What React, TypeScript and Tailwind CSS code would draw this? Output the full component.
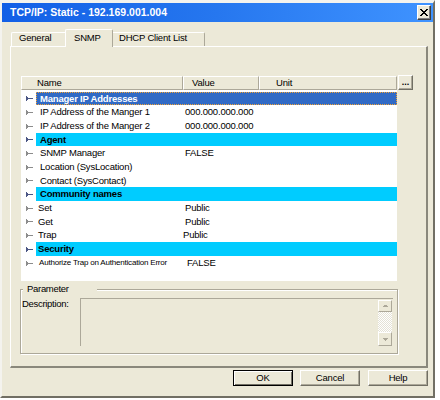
import React from 'react';

type Row = {
  kind: 'sel' | 'hdr' | 'data';
  name: string;
  value?: string;
  h: number;
  pl: number;
  vpl?: number;
  small?: boolean;
};

const rows: Row[] = [
  { kind: 'sel', name: 'Manager IP Addresses', h: 13, pl: 4 },
  { kind: 'data', name: 'IP Address of the Manger 1', value: '000.000.000.000', h: 14, pl: 4 },
  { kind: 'data', name: 'IP Address of the Manger 2', value: '000.000.000.000', h: 14, pl: 4 },
  { kind: 'hdr', name: 'Agent', h: 13, pl: 4 },
  { kind: 'data', name: 'SNMP Manager', value: 'FALSE', h: 14, pl: 4 },
  { kind: 'data', name: 'Location (SysLocation)', h: 14, pl: 4 },
  { kind: 'data', name: 'Contact (SysContact)', h: 13, pl: 4 },
  { kind: 'hdr', name: 'Community names', h: 14, pl: 4 },
  { kind: 'data', name: 'Set', value: 'Public', h: 14, pl: 2 },
  { kind: 'data', name: 'Get', value: 'Public', h: 13, pl: 2 },
  { kind: 'data', name: 'Trap', value: 'Public', h: 14, pl: 2, vpl: 0 },
  { kind: 'hdr', name: 'Security', h: 14, pl: 2 },
  { kind: 'data', name: 'Authorize Trap on Authentication Error', value: 'FALSE', h: 14, pl: 3, vpl: 4, small: true },
];

function Marker({ dark }: { dark: boolean }) {
  return (
    <svg width="7" height="5" viewBox="0 0 7 5" className="block" shapeRendering="crispEdges">
      <g fill={dark ? '#4B5684' : '#8C8C8C'}>
        <rect x="0" y="0" width="1" height="5" />
        <rect x="1" y="1" width="1" height="3" />
        <rect x="2" y="2" width="5" height="1" />
      </g>
    </svg>
  );
}

function ListRow({ r }: { r: Row }) {
  const dark = r.kind !== 'data';
  let area = 'flex-1 h-full flex items-center';
  if (r.kind === 'sel') area += ' bg-[#316AC5] border border-dotted border-[#F2A235] text-white font-bold';
  if (r.kind === 'hdr') area += ' bg-[#00CCFF] font-bold';
  const textSize = r.small ? 'text-[8px] tracking-[-0.2px]' : 'text-[9.5px] tracking-[-0.2px]';
  return (
    <div className="flex" style={{ height: r.h }}>
      <div className="w-[15px] h-full flex items-center pl-[5px]">
        <Marker dark={dark} />
      </div>
      <div className={area}>
        <div
          className={`w-[147px] shrink-0 whitespace-nowrap leading-none ${textSize} ${r.kind === 'sel' ? '-ml-px' : ''}`}
          style={{ paddingLeft: r.pl }}
        >
          {r.name}
        </div>
        {r.value && (
          <div
            className="whitespace-nowrap leading-none text-[9.5px] tracking-[-0.2px]"
            style={{ paddingLeft: r.vpl ?? 2 }}
          >
            {r.value}
          </div>
        )}
      </div>
    </div>
  );
}

const headCell =
  'h-full flex items-center border-t border-l border-t-white border-l-white border-r border-b border-r-[#ACA899] border-b-[#ACA899] text-[9.5px] tracking-[-0.2px] leading-none';

const btnNormal =
  'w-[60px] h-[16px] flex items-center justify-center bg-[#ECE9D8] border border-t-white border-l-white border-r-[#716F64] border-b-[#716F64] shadow-[inset_-1px_-1px_0_#ACA899] text-[9.5px] tracking-[-0.2px] leading-none';

export default function App() {
  return (
    <div className="w-[440px] h-[400px] bg-white font-['Liberation_Sans',Arial,sans-serif] text-black">
      <div className="w-[435px] h-[398px] bg-[#ECE9D8] flex flex-col border-t-[3px] border-l-2 border-r-2 border-b-2 border-t-[#F4F3EE] border-l-[#F4F3EE] border-r-[#716F64] border-b-[#716F64]">
        {/* Title bar */}
        <div className="h-[19px] shrink-0 flex items-center justify-between bg-linear-to-r from-[#125FE6] via-[#2677EF] to-[#3F93FF] pl-[8px] pr-[2px]">
          <span className="text-white font-bold text-[10.5px] leading-none whitespace-nowrap">
            TCP/IP: Static - 192.169.001.004
          </span>
          <div className="w-[14px] h-[15px] bg-[#ECE9D8] flex items-center justify-center border border-t-white border-l-white border-r-[#404040] border-b-[#404040] shadow-[inset_-1px_-1px_0_#808080]">
            <svg width="8" height="7" viewBox="0 0 8 7" shapeRendering="crispEdges">
              <path d="M0 0h2l2 2.5L6 0h2L5 3.5 8 7H6L4 4.5 2 7H0l3-3.5z" fill="#000" />
            </svg>
          </div>
        </div>

        {/* Tabs */}
        <div className="h-[24px] shrink-0 flex items-end pl-[9px]">
          <div className="w-[54px] h-[14px] pl-[7px] border-t border-l border-t-white border-l-white text-[9.5px] tracking-[-0.2px] leading-[9px] rounded-tl-[2px]">
            General
          </div>
          <div className="relative z-10 -mb-px w-[48px] h-[18px] pl-[8px] pt-[3px] bg-[#ECE9D8] border-t border-l border-r border-t-white border-l-white border-r-[#ACA899] text-[9.5px] tracking-[-0.2px] leading-[9px] rounded-t-[2px]">
            SNMP
          </div>
          <div className="w-[92px] h-[14px] pl-[6px] border-t border-r border-t-white border-r-[#ACA899] text-[9.5px] tracking-[-0.2px] leading-[9px] rounded-tr-[2px]">
            DHCP Client List
          </div>
        </div>

        {/* Panel */}
        <div className="ml-[8px] w-[418px] h-[322px] shrink-0 flex flex-col border-t border-l border-t-white border-l-white border-r-2 border-b-2 border-r-[#8A887C] border-b-[#8A887C]">
          <div className="flex pt-[29px] pl-[10px]">
            <div className="w-[376px]">
              <div className="h-[14px] flex">
                <div className={`${headCell} w-[162px] pl-[15px]`}>Name</div>
                <div className={`${headCell} w-[76px] pl-[8px]`}>Value</div>
                <div className={`${headCell} flex-1 pl-[16px]`}>Unit</div>
              </div>
              <div className="h-[191px] bg-white pt-[2px]">
                {rows.map((r) => (
                  <ListRow key={r.name} r={r} />
                ))}
              </div>
            </div>
            <div className="ml-[1px] -mt-[1px] w-[15px] h-[15px] bg-[#ECE9D8] flex items-end justify-center pb-[2px] border border-t-white border-l-white border-r-[#716F64] border-b-[#716F64] shadow-[inset_-1px_-1px_0_#ACA899] text-[9px] font-bold leading-none">
              ...
            </div>
          </div>

          {/* Parameter group */}
          <div className="relative ml-[9px] mt-[8px] w-[378px] h-[65px] border border-[#ACA899] shadow-[1px_1px_0_#fff,inset_1px_1px_0_#fff]">
            <div className="absolute left-[2px] -top-[7px] h-[12px] w-[74px] bg-[#ECE9D8] pl-[4px] text-[9.5px] tracking-[-0.3px] leading-[12px]">
              Parameter
            </div>
            <div className="flex pt-[8px]">
              <div className="w-[59px] pl-[1px] text-[9.5px] tracking-[-0.3px] leading-[12px]">Description:</div>
              <div className="w-[313px] h-[48px] border-t border-l border-[#ACA899] flex justify-end pr-[1px] pt-[1px]">
                <div className="w-[14px] h-full flex flex-col">
                  <div className="h-[12px] flex items-center justify-center bg-[#ECE9D8] border border-t-white border-l-white border-r-[#ACA899] border-b-[#ACA899]">
                    <svg width="5" height="2" viewBox="0 0 5 2" shapeRendering="crispEdges">
                      <rect x="0" y="1" width="5" height="1" fill="#ACA899" />
                      <rect x="1" y="0" width="3" height="1" fill="#ACA899" />
                    </svg>
                  </div>
                  <div className="flex-1 [background-image:repeating-conic-gradient(#ffffff_0_25%,#E4E2D6_0_50%)] [background-size:2px_2px]" />
                  <div className="h-[14px] flex items-center justify-center bg-[#ECE9D8] border border-t-white border-l-white border-r-[#ACA899] border-b-[#ACA899]">
                    <svg width="5" height="3" viewBox="0 0 5 3" shapeRendering="crispEdges">
                      <rect x="0" y="0" width="5" height="1" fill="#ACA899" />
                      <rect x="1" y="1" width="3" height="1" fill="#ACA899" />
                      <rect x="2" y="2" width="1" height="1" fill="#ACA899" />
                    </svg>
                  </div>
                </div>
              </div>
            </div>
          </div>
        </div>

        {/* Buttons */}
        <div className="mt-[2px] flex justify-end pr-[5px]">
          <div className="w-[60px] h-[16px] flex items-center justify-center bg-[#ECE9D8] border border-black shadow-[inset_1px_1px_0_#fff,inset_-1px_-1px_0_#716F64] text-[9.5px] tracking-[-0.2px] leading-none">
            OK
          </div>
          <div className={`${btnNormal} ml-[7px]`}>Cancel</div>
          <div className={`${btnNormal} ml-[8px]`}>Help</div>
        </div>
      </div>
    </div>
  );
}
